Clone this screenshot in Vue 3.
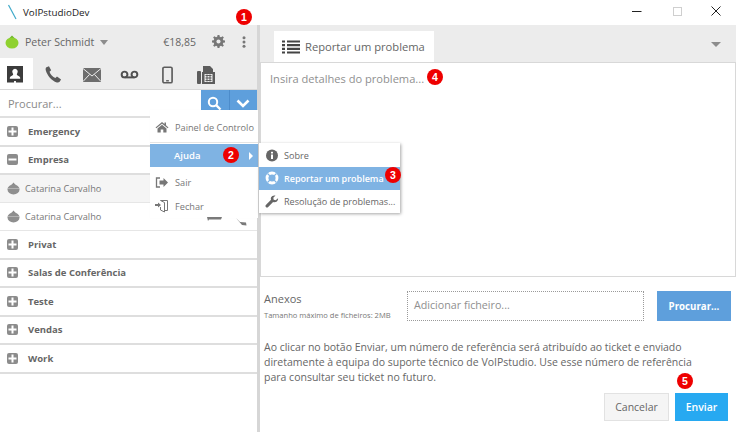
<script setup>
const groupsTop = [
  { name: 'Emergency', open: false },
  { name: 'Empresa', open: true }
]
const groupsBottom = ['Privat', 'Salas de Conferência', 'Teste', 'Vendas', 'Work']
const contacts = ['Catarina Carvalho', 'Catarina Carvalho']
</script>

<template>
  <div class="app">
    <div class="titlebar">
      <svg class="logo" width="12" height="18" viewBox="0 0 12 18"><path d="M1.500 1 L9 15" stroke="#3fa9c9" stroke-width="1.200" fill="none"/></svg>
      <span class="appname">VoIPstudioDev</span>
      <div class="winbtns">
        <svg width="10" height="10" viewBox="0 0 10 10"><path d="M0 5.500h9.500" stroke="#222" stroke-width="1"/></svg>
        <svg width="10" height="10" viewBox="0 0 10 10"><rect x="1.500" y="1.500" width="8" height="8" fill="none" stroke="#cfcfcf"/></svg>
        <svg width="10" height="10" viewBox="0 0 10 10"><path d="M.5 .5l9 9M9.500 .5l-9 9" stroke="#222" stroke-width="1"/></svg>
      </div>
    </div>

    <div class="body">
      <aside class="left">
        <div class="userbar">
          <svg class="status" width="14" height="14" viewBox="0 0 14 14"><path d="M7 .5 10.500 4H3.500z" fill="#6cb52a"/><ellipse cx="7" cy="8" rx="6.500" ry="5.500" fill="#8fd12f"/></svg>
          <span class="uname">Peter Schmidt</span>
          <span class="caret"></span>
          <span class="balance">€18,85</span>
          <svg class="gear" width="13" height="13" viewBox="0 0 14 14"><path fill="#777" d="M6 0h2l.4 2 1.300.5L11.400 1.400 12.800 2.800 11.600 4.400l.5 1.300 1.900.3v2l-1.900.4-.5 1.300 1.200 1.600-1.400 1.400-1.700-1.100-1.300.5L8 14H6l-.4-2-1.300-.5-1.700 1.100-1.400-1.400 1.200-1.600-.5-1.300L0 8V6l1.900-.3.5-1.300L1.200 2.800 2.600 1.400l1.700 1.100L5.600 2z"/><circle cx="7" cy="7" r="2.200" fill="#ececec"/></svg>
          <svg class="dots" width="4" height="12" viewBox="0 0 4 12"><circle cx="2" cy="1.700" r="1.500" fill="#777"/><circle cx="2" cy="6" r="1.500" fill="#777"/><circle cx="2" cy="10.300" r="1.500" fill="#777"/></svg>
          <span class="badge b1">1</span>
        </div>

        <div class="tabs">
          <div class="tab active">
            <svg width="16" height="17" viewBox="0 0 17 18"><path fill="#3c3c3c" fill-rule="evenodd" d="M0 0h17v17.500h-7.500v-1.500h-2v1.500H0zM8.500 3a3 3 0 0 0-2.500 4.500c.5 1 .8 1.500.3 2C5 10.500 3 11 3 12.500V13.500h11v-1c0-1.500-2-2-3.300-3-.5-.5-.2-1 .3-2A3 3 0 0 0 8.500 3z"/></svg>
          </div>
          <div class="tab">
            <svg width="17" height="17" viewBox="0 0 18 18"><path fill="#5a5a5a" d="M1.500 1.200 4.200.2 6.500 4.500 4.800 6c.8 2.700 3.500 5.600 6.200 6.700l1.700-1.500 4.300 3-1.500 2.500c-.5.700-1.800 1-3 .7C7 15.300 2.300 10 .8 4.400.5 3 .7 1.800 1.500 1.200z"/></svg>
          </div>
          <div class="tab">
            <svg width="18" height="14" viewBox="0 0 18 14"><rect width="18" height="14" fill="#6d6d6d"/><path d="M0 .5 9 8 18 .5M0 13.500 6.500 6.500M18 13.500 11.500 6.500" stroke="#ececec" stroke-width="1" fill="none"/></svg>
          </div>
          <div class="tab">
            <svg width="19" height="9" viewBox="0 0 20 10"><circle cx="4.500" cy="5" r="3.200" fill="none" stroke="#4f4f4f" stroke-width="2.200"/><circle cx="15.500" cy="5" r="3.200" fill="none" stroke="#4f4f4f" stroke-width="2.200"/><path d="M4.500 8.200h11" stroke="#4f4f4f" stroke-width="2.200"/></svg>
          </div>
          <div class="tab">
            <svg width="11" height="18" viewBox="0 0 12 19"><rect x="1" y="1" width="10" height="17" rx="1.500" fill="none" stroke="#5c5c5c" stroke-width="1.800"/><path d="M4.500 15.800h3" stroke="#5c5c5c" stroke-width="1.500"/></svg>
          </div>
          <div class="tab">
            <svg width="18" height="18" viewBox="0 0 18 18"><rect y="5" width="4" height="13" rx="1" fill="#5c5c5c"/><path fill="#5c5c5c" fill-rule="evenodd" d="M5 6h1V0h7l3 3v3h2v12H5zM7.500 8v8h8V8z"/><path d="M8.500 9.500h6M8.500 12h6M8.500 14.500h6M10 8.500v7M13 8.500v7" stroke="#5c5c5c" stroke-width="1"/></svg>
          </div>
        </div>

        <div class="searchrow">
          <span class="searchtext">Procurar...</span>
          <div class="sbtn first">
            <svg width="15" height="15" viewBox="0 0 15 15"><circle cx="6" cy="6" r="4.200" fill="none" stroke="#fff" stroke-width="2"/><path d="M9.200 9.200 13.500 13.500" stroke="#fff" stroke-width="2.400"/></svg>
          </div>
          <div class="sbtn">
            <svg width="14" height="9" viewBox="0 0 14 9"><path d="M1.500 1.500 7 7l5.500-5.500" fill="none" stroke="#fff" stroke-width="2.600"/></svg>
          </div>
        </div>

        <div class="list">
          <template v-for="g in groupsTop" :key="g.name">
            <div class="group">
              <span class="pm">
                <svg width="11" height="11" viewBox="0 0 11 11"><path d="M1.500 5.500h8" stroke="#fff" stroke-width="2"/><path v-if="!g.open" d="M5.500 1.500v8" stroke="#fff" stroke-width="2"/></svg>
              </span>
              <span class="gname">{{ g.name }}</span>
            </div>
          </template>
          <div v-for="(c, i) in contacts" :key="i" class="contact" :class="{ shaded: i === 0 }">
            <svg width="13" height="14" viewBox="0 0 13 14"><path d="M6.500 .5 9 3.500H4z" fill="#8a8a8a"/><ellipse cx="6.500" cy="7.500" rx="6" ry="5" fill="#8f8f8f"/><path d="M.8 6.500h11.400" stroke="#bdbdbd" stroke-width=".8"/></svg>
            <span>{{ c }}</span>
          </div>
          <div v-for="g in groupsBottom" :key="g" class="group">
            <span class="pm">
              <svg width="11" height="11" viewBox="0 0 11 11"><path d="M1.500 5.500h8M5.500 1.500v8" stroke="#fff" stroke-width="2"/></svg>
            </span>
            <span class="gname">{{ g }}</span>
          </div>
        </div>

        <div class="menu">
          <div class="mi top">
            <svg class="mic" width="13" height="12" viewBox="0 0 13 12"><path fill="#777" d="M6.500 1 0 6.500l.8.8L6.500 2.700l5.700 4.600.8-.8L10.500 4.300V1.500H9v1.500zM2 7.500V11.500h3.200V8.500h2.600v3H11V7.500L6.500 3.800z"/></svg>
            <span class="mt">Painel de Controlo</span>
          </div>
          <div class="mi hl">
            <span class="ajuda">Ajuda</span>
            <span class="badge b2">2</span>
            <span class="rarrow"></span>
          </div>
          <div class="mi small">
            <svg class="mic" width="13" height="11" viewBox="0 0 13 11"><path d="M4.500 1H1v9h3.500" fill="none" stroke="#777" stroke-width="1.300"/><path fill="#777" d="M4 3.500h4V1l4.500 4.500L8 10V7.500H4z"/></svg>
            <span class="mt">Sair</span>
          </div>
          <div class="mi small">
            <svg class="mic" width="14" height="14" viewBox="0 0 14 14"><path d="M5.500 1.500h7v10h-3M5.500 1.500l4 2V13l-4-2V8" fill="none" stroke="#777" stroke-width="1"/><path fill="#777" d="M0 5h3V3.500L6 6 3 8.500V7H0z"/></svg>
            <span class="mt">Fechar</span>
          </div>
        </div>

        <div class="peek">
          <svg width="46" height="10" viewBox="0 0 46 10"><path d="M1 0h15l-1 2.500H3L2 4z" fill="#7a7a7a"/><path d="M30 1l4 4 6 .5.5 3-4.500-.5z" fill="#7a7a7a"/></svg>
        </div>

        <div class="submenu">
          <div class="si">
            <svg width="13" height="13" viewBox="0 0 13 13"><circle cx="6.500" cy="6.500" r="6" fill="#666"/><rect x="5.500" y="5.500" width="2" height="4.500" fill="#fff"/><rect x="5.500" y="2.800" width="2" height="1.700" fill="#fff"/></svg>
            <span>Sobre</span>
          </div>
          <div class="si hl2">
            <svg width="14" height="14" viewBox="0 0 14 14"><circle cx="7" cy="7" r="5" fill="none" stroke="#fff" stroke-width="2.800"/><path d="M2.500 2.500l2.600 2.600M11.500 2.500 8.900 5.100M2.500 11.500l2.600-2.600M11.500 11.500 8.900 8.900" stroke="#7fb3e3" stroke-width="1.300"/></svg>
            <span>Reportar um problema</span>
            <span class="badge b3">3</span>
          </div>
          <div class="si">
            <svg width="13" height="13" viewBox="0 0 13 13"><path fill="#666" d="M12.500 3.200 10.200 5.200 8.200 4.700 7.800 2.800 10 .6C8.300 0 6.200.8 5.500 2.500c-.3.800-.3 1.500 0 2.300L.6 9.700c-.8.800-.8 1.600-.2 2.300s1.500.7 2.300 0l4.900-4.900c2.300.8 4.800-.7 5-3.100 0-.3 0-.6-.1-.8z"/></svg>
            <span>Resolução de problemas...</span>
          </div>
        </div>
      </aside>

      <div class="divider"></div>

      <main class="right">
        <div class="rhead">
          <div class="rtab">
            <svg width="18" height="14" viewBox="0 0 18 14"><path d="M0 1.500h3M5 1.500h13M0 5.200h3M5 5.200h13M0 8.800h3M5 8.800h13M0 12.500h3M5 12.500h13" stroke="#444" stroke-width="2.200"/></svg>
            <span>Reportar um problema</span>
          </div>
          <span class="caret rc"></span>
        </div>

        <div class="area">
          <span>Insira detalhes do problema...</span>
          <span class="badge b4">4</span>
        </div>

        <div class="attach">
          <div class="alabels">
            <div class="atitle">Anexos</div>
            <div class="asub">Tamanho máximo de ficheiros: 2MB</div>
          </div>
          <div class="drop">Adicionar ficheiro...</div>
          <div class="browse">Procurar...</div>
        </div>

        <p class="info">Ao clicar no botão Enviar, um número de referência será atribuído ao ticket e enviado diretamente à equipa do suporte técnico de VoIPstudio. Use esse número de referência para consultar seu ticket no futuro.</p>

        <div class="actions">
          <div class="btn cancel">Cancelar</div>
          <div class="btn send">Enviar<span class="badge b5">5</span></div>
        </div>
      </main>
    </div>
  </div>
</template>

<style>
html, body { margin: 0; background: #fff; overflow: hidden; }
</style>

<style scoped>
.app { width: 736px; height: 432px; display: flex; flex-direction: column; font-family: "Open Sans", "Liberation Sans", sans-serif; color: #666; background: #fff; overflow: hidden; }
.titlebar { height: 25px; flex: none; display: flex; align-items: center; position: relative; }
.logo { margin-left: 7px; }
.appname { margin-left: 4px; font-size: 9.800px; color: #222; }
.winbtns { margin-left: auto; display: flex; gap: 29.500px; padding-right: 15px; margin-top: -3px; }

.body { flex: 1; display: flex; min-height: 0; }
.left { width: 257px; flex: none; position: relative; display: flex; flex-direction: column; }
.divider { width: 3px; background: #d6d6d6; flex: none; }
.right { flex: 1; min-width: 0; display: flex; flex-direction: column; }

.userbar { height: 33px; background: #ececec; display: flex; align-items: center; position: relative; flex: none; }
.status { margin-left: 5px; }
.uname { margin-left: 6px; font-size: 10.600px; color: #666; }
.caret { width: 0; height: 0; border-left: 4.500px solid transparent; border-right: 4.500px solid transparent; border-top: 5px solid #8c8c8c; margin-left: 6px; margin-top: 1px; }
.balance { margin-left: auto; font-size: 10.500px; color: #666; }
.gear { margin-left: 16px; }
.dots { margin-left: 17px; margin-right: 11px; }

.tabs { height: 31px; background: #ececec; display: flex; flex: none; border-bottom: 1px solid #d8d8d8; }
.tab { width: 38px; flex: none; display: flex; align-items: center; justify-content: center; padding-top: 2px; box-sizing: border-box; }
.tab.active { background: #fff; width: 33px; padding-right: 3px; margin-right: 1.500px; }

.searchrow { height: 26px; display: flex; align-items: center; flex: none; border-bottom: 2px solid #e0e0e0; }
.searchtext { flex: 1; padding-left: 8px; font-size: 11px; color: #8a8a8a; }
.sbtn { width: 27.500px; height: 26px; background: #5e9fdc; display: flex; align-items: center; justify-content: center; }
.sbtn.first { border-right: 1px solid #4c8ccb; }

.list { flex: 1; }
.group { height: 26.500px; border-bottom: 2px solid #dedede; display: flex; align-items: center; }
.pm { width: 11px; height: 11px; background: #8c8c8c; border-radius: 2px; margin-left: 7px; display: flex; }
.gname { margin-left: 10px; font-size: 9.500px; font-weight: 700; color: #666; }
.contact { height: 27px; border-bottom: 1px solid #e6e6e6; display: flex; align-items: center; font-size: 9.200px; color: #777; }
.contact svg { margin-left: 7px; margin-right: 5px; }
.contact.shaded { background: #f5f5f5; }

.menu { position: absolute; left: 150px; top: 85px; width: 108px; background: #fff; box-shadow: 0 0 1px rgba(0,0,0,.04); }
.mi { display: flex; align-items: center; position: relative; font-size: 9.200px; color: #777; white-space: nowrap; }
.mi.top { height: 33px; box-sizing: border-box; padding-top: 2px; border-bottom: 1px solid #e4e4e4; margin-bottom: 1px; }
.mi.hl { height: 23px; background: #7fb3e3; color: #fff; font-size: 9.500px; font-weight: 600; margin-bottom: 4px; }
.mi.small { height: 23.500px; }
.mic { margin-left: 5px; width: 14px; flex: none; }
.mt { margin-left: 6px; }
.ajuda { margin-left: 24px; }
.rarrow { position: absolute; right: 5px; top: 8px; width: 0; height: 0; border-top: 4px solid transparent; border-bottom: 4px solid transparent; border-left: 4px solid #fff; }
.peek { position: absolute; left: 206px; top: 192px; display: flex; }

.submenu { position: absolute; left: 259px; top: 118px; width: 141px; background: #fff; box-shadow: 1px 1px 3px rgba(0,0,0,.35); z-index: 3; display: flex; flex-direction: column; padding-top: 1px; }
.si { height: 23px; display: flex; align-items: center; font-size: 9.100px; color: #666; position: relative; white-space: nowrap; }
.si svg { margin-left: 6px; margin-right: 5px; width: 14px; flex: none; }
.si.hl2 { background: #7fb3e3; color: #fff; font-weight: 600; font-size: 9px; height: 22.500px; }

.badge { position: absolute; width: 16px; height: 16px; border-radius: 50%; background: #ee0000; color: #fff; font-size: 10.500px; font-weight: 700; display: flex; align-items: center; justify-content: center; line-height: 1; font-family: "Liberation Sans", sans-serif; z-index: 5; }
.b1 { left: 236px; top: -16px; }
.b2 { left: 73px; top: 3px; }
.b3 { left: 126px; top: 0; }
.b4 { left: 166px; top: 6px; }
.b5 { left: 2px; top: -20px; }

.rhead { background: #ececec; display: flex; align-items: flex-end; position: relative; flex: none; border-bottom: 1px solid #d8d8d8; height: 37px; }
.rtab { margin-left: 14px; width: 160px; height: 31px; background: #fff; display: flex; align-items: center; box-sizing: border-box; padding-left: 8px; font-size: 11.200px; color: #666; gap: 5px; }
.rc { position: absolute; right: 15px; top: 17px; margin: 0; border-left-width: 5px; border-right-width: 5px; }

.area { height: 214px; flex: none; border-left: 1px solid #d8d8d8; border-right: 1px solid #d8d8d8; border-bottom: 1px solid #d8d8d8; position: relative; padding: 8px 0 0 9px; box-sizing: border-box; font-size: 11.100px; color: #8f8f8f; }

.attach { display: flex; margin: 14px 5px 0 4px; height: 30px; }
.alabels { width: 143px; flex: none; }
.atitle { font-size: 11px; color: #666; line-height: 14px; margin-top: 1px; }
.asub { font-size: 7.550px; color: #777; line-height: 10px; margin-top: 4px; white-space: nowrap; }
.drop { width: 237px; flex: none; height: 30px; border: 1px dotted #9a9a9a; box-sizing: border-box; font-size: 10.700px; color: #8f8f8f; padding: 6px 0 0 6px; }
.browse { margin-left: 13px; width: 74px; height: 30px; background: #5e9fdc; color: #fff; font-size: 9.700px; font-weight: 700; display: flex; align-items: center; justify-content: center; }

.info { margin: 19px 27px 0 4px; font-size: 10.500px; line-height: 15px; color: #666; }
.actions { display: flex; justify-content: flex-end; gap: 6px; margin: 8px 8px 0 0; }
.btn { height: 28px; display: flex; align-items: center; justify-content: center; font-size: 10.500px; position: relative; box-sizing: border-box; }
.cancel { width: 65px; background: #f5f5f5; border: 1px solid #e2e2e2; color: #666; }
.send { width: 53px; background: #27a9f1; color: #fff; font-weight: 600; }
</style>
